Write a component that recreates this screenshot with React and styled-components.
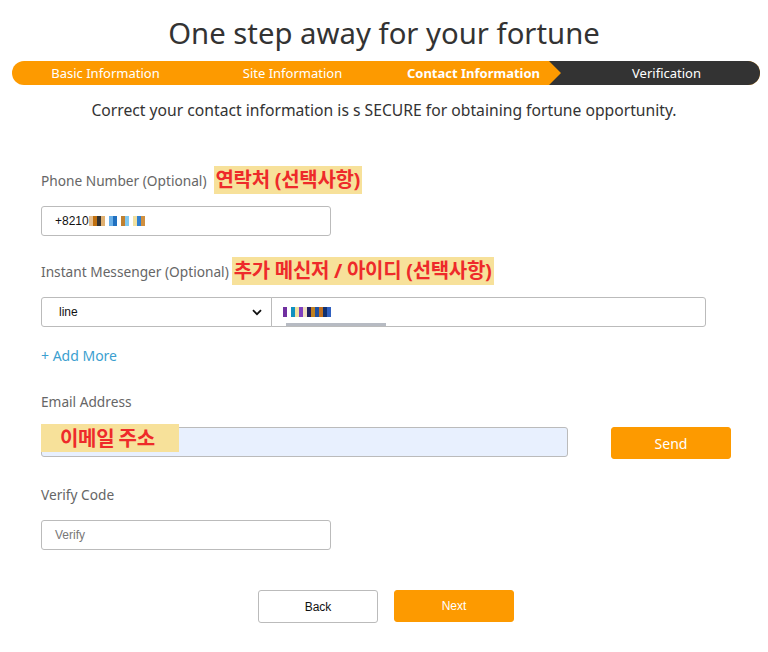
import React from "react";
import styled, { createGlobalStyle } from "styled-components";

const GlobalStyle = createGlobalStyle`
  body {
    margin: 0;
    background: #fff;
    font-family: "Noto Sans", "Noto Sans CJK KR", sans-serif;
    color: #333;
  }
`;

const Page = styled.div`
  width: 768px;
  padding-top: 13px;
  box-sizing: border-box;
`;

const Title = styled.h1`
  margin: 0;
  font-size: 29.3px;
  line-height: 40px;
  font-weight: 400;
  text-align: center;
  color: #333;
`;

const StepBar = styled.div`
  margin: 8px 8px 0 12px;
  height: 24px;
  border-radius: 12px;
  overflow: hidden;
  background: #fd9a00;
  display: flex;
`;

const Step = styled.div`
  flex: 1;
  position: relative;
  display: flex;
  align-items: center;
  justify-content: center;
  font-size: 13px;
  color: #fff;
  font-weight: ${p => (p.$current ? 700 : 400)};
  background: ${p => (p.$todo ? "#333" : "transparent")};

  ${p =>
    p.$todo &&
    `
    &::before {
      content: "";
      position: absolute;
      top: 0;
      bottom: 0;
      left: -24px;
      width: 24px;
      background: #333;
      clip-path: polygon(0 0, 100% 0, 100% 100%, 0 100%, 12px 50%);
    }
  `}
`;

const StepLabel = styled.span`
  position: relative;
  left: ${p => p.$shift || 0}px;
`;

const Subtitle = styled.p`
  margin: 15px 0 0;
  font-size: 15.7px;
  line-height: 20px;
  text-align: center;
  color: #333;
`;

const Form = styled.div`
  padding: 46px 0 0 41px;
  display: flex;
  flex-direction: column;
`;

const Field = styled.div`
  display: flex;
  flex-direction: column;
  gap: 12px;
  margin-bottom: 21px;
`;

const LabelRow = styled.div`
  height: 28px;
  display: flex;
  align-items: center;
  gap: ${p => p.$gap || 6}px;
`;

const Label = styled.span`
  font-size: 13.7px;
  color: #666;
`;

const Note = styled.span`
  background: #f7e19a;
  color: #ee2a2a;
  font-weight: 700;
  font-size: 20px;
  line-height: 28px;
  padding: 0 2px;
  letter-spacing: -0.3px;
`;

const InputBox = styled.div`
  position: relative;
  box-sizing: border-box;
  width: ${p => p.$w}px;
  height: 30px;
  border: 1px solid #bbb;
  border-radius: ${p => p.$radius || "3px"};
  background: ${p => p.$bg || "#fff"};
  display: flex;
  align-items: center;
  padding-left: ${p => p.$pad || 13}px;
  font-family: "Liberation Sans", Arial, sans-serif;
  font-size: 12px;
  color: ${p => (p.$placeholder ? "#777" : "#111")};
`;

const Row = styled.div`
  display: flex;
  align-items: flex-start;
  gap: ${p => p.$gap || 0}px;
`;

const SelectBox = styled(InputBox)`
  justify-content: space-between;
  padding-left: 17px;
  padding-right: 9px;
`;

const Pixels = styled.span`
  display: inline-flex;
  height: 10px;
  align-items: stretch;
`;

const Px = styled.span`
  width: 4px;
  background: ${p => p.$c};
`;

const FakeScroll = styled.span`
  position: absolute;
  left: 14px;
  bottom: 0;
  width: 100px;
  height: 3px;
  background: #b7bbc3;
`;

const AddMore = styled.a`
  font-size: 14px;
  line-height: 20px;
  color: #3c9fd0;
  margin: -2px 0 21px;
  cursor: pointer;
`;

const EmailNote = styled(Note)`
  position: absolute;
  left: -1px;
  top: -4px;
  width: 138px;
  height: 28px;
  box-sizing: border-box;
  padding-left: 19px;
  font-family: "Noto Sans CJK KR", sans-serif;
`;

const Button = styled.button`
  box-sizing: border-box;
  width: 120px;
  height: ${p => p.$h || 32}px;
  border-radius: 3px;
  font-family: ${p => (p.$arial ? '"Liberation Sans", Arial, sans-serif' : '"Noto Sans", sans-serif')};
  font-size: ${p => p.$size || 14}px;
  cursor: pointer;
  border: 1px solid ${p => (p.$primary ? "#fd9a00" : "#bbb")};
  background: ${p => (p.$primary ? "#fd9a00" : "#fff")};
  color: ${p => (p.$primary ? "#fff" : "#111")};
`;

const Actions = styled.div`
  display: flex;
  justify-content: center;
  gap: 16px;
  margin: 19px 0 0 -37px;
`;

const phonePx = ["#e8c090", "#c07010", "#333", "#e0b070", "#fff", "#6ab0e8", "#2070c0", "#fff", "#c08030", "#80c8f0", "#fff", "#f0e0a0", "#3080d0", "#d09040"];
const imPx = ["#7030a0", "#fff", "#1090c0", "#f0e0a0", "#8040c0", "#f0e0c0", "#202060", "#c08020", "#2050a0", "#c07020", "#103070", "#3060c0"];

const Chevron = () => (
  <svg width="10" height="7" viewBox="0 0 10 7">
    <path d="M1 1.2 L5 5.2 L9 1.2" fill="none" stroke="#111" strokeWidth="1.8" />
  </svg>
);

export default function App() {
  return (
    <Page>
      <GlobalStyle />
      <Title>One step away for your fortune</Title>
      <StepBar>
        <Step><StepLabel>Basic Information</StepLabel></Step>
        <Step><StepLabel>Site Information</StepLabel></Step>
        <Step $current><StepLabel $shift={-6}>Contact Information</StepLabel></Step>
        <Step $todo><StepLabel>Verification</StepLabel></Step>
      </StepBar>
      <Subtitle>Correct your contact information is s SECURE for obtaining fortune opportunity.</Subtitle>

      <Form>
        <Field>
          <LabelRow $gap={7}>
            <Label>Phone Number (Optional)</Label>
            <Note>연락처 (선택사항)</Note>
          </LabelRow>
          <InputBox $w={290}>
            +8210
            <Pixels>{phonePx.map((c, i) => <Px key={i} $c={c} />)}</Pixels>
          </InputBox>
        </Field>

        <Field>
          <LabelRow $gap={3}>
            <Label>Instant Messenger (Optional)</Label>
            <Note>추가 메신저 / 아이디 (선택사항)</Note>
          </LabelRow>
          <Row>
            <SelectBox $w={231} $radius="3px 0 0 3px">
              line
              <Chevron />
            </SelectBox>
            <InputBox $w={435} $radius="0 3px 3px 0" $pad={11} style={{ marginLeft: -1 }}>
              <Pixels>{imPx.map((c, i) => <Px key={i} $c={c} />)}</Pixels>
              <FakeScroll />
            </InputBox>
          </Row>
        </Field>

        <AddMore>+ Add More</AddMore>

        <Field>
          <LabelRow>
            <Label>Email Address</Label>
          </LabelRow>
          <Row $gap={43}>
            <InputBox $w={527} $bg="#e8f0fe">
              <EmailNote>이메일 주소</EmailNote>
            </InputBox>
            <Button $primary>Send</Button>
          </Row>
        </Field>

        <Field>
          <LabelRow>
            <Label>Verify Code</Label>
          </LabelRow>
          <InputBox $w={290} $placeholder>Verify</InputBox>
        </Field>

        <Actions>
          <Button $arial $size={12} $h={33}>Back</Button>
          <Button $arial $size={12} $primary>Next</Button>
        </Actions>
      </Form>
    </Page>
  );
}
